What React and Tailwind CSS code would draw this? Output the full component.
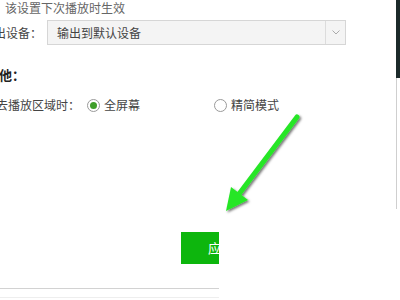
import React from "react";

const font = { fontFamily: '"Noto Sans CJK SC", "Noto Sans", sans-serif' };

function Radio({ checked }) {
  return (
    <span className="w-[13px] h-[13px] rounded-full border border-[#9a9a9a] bg-white flex items-center justify-center shrink-0">
      {checked && <span className="w-[7px] h-[7px] rounded-full bg-[#3f9e2a]" />}
    </span>
  );
}

export default function App() {
  return (
    <div className="relative w-[400px] h-[300px] overflow-hidden bg-white flex" style={font}>
      <div className="flex-1 flex flex-col text-[12px] leading-[16px] text-[#555]">
        <div className="ml-[5px] text-[#666]">该设置下次播放时生效</div>
        <div className="mt-[4px] flex items-center h-[25px]">
          <span className="ml-[-18px] w-[65px] shrink-0 text-[#444]">输出设备：</span>
          <div className="w-[299px] h-[25px] border border-[#d6d6d6] bg-[#f4f4f4] flex items-center">
            <span className="flex-1 pl-[9px] text-[#444]">输出到默认设备</span>
            <span className="w-[20px] h-full border-l border-[#dcdcdc] flex items-center justify-center">
              <svg width="8" height="5" viewBox="0 0 8 5">
                <path d="M0.5 0.5 L4 4 L7.5 0.5" fill="none" stroke="#aaa" strokeWidth="1" />
              </svg>
            </span>
          </div>
        </div>
        <div className="mt-[22px] ml-[-14px] font-bold text-[13px] text-[#222]">其他：</div>
        <div className="mt-[14px] flex items-center h-[16px]">
          <span className="ml-[-16px] w-[103px] shrink-0 text-[#444]">失去播放区域时：</span>
          <Radio checked />
          <span className="ml-[4px] w-[110px] text-[#444]">全屏幕</span>
          <Radio />
          <span className="ml-[4px] text-[#444]">精简模式</span>
        </div>
        <div className="mt-[119px] ml-[181px] w-[80px] h-[32px] bg-[#0db60d] text-white text-[13px] flex items-center justify-center">
          应用
        </div>
        <div className="mt-[24px] h-px bg-[#d2d2d2]" />
        <div className="mt-[8px] h-px bg-[#eeeeee]" />
      </div>
      <div className="w-[4px] flex flex-col">
        <div className="h-[78px] bg-[#1c2a2a]" />
        <div className="flex-1 border-l border-[#cfcfcf] bg-white" />
      </div>

      <div className="absolute left-[219px] top-[209px] right-0 bottom-0 bg-white" />

      <svg className="absolute left-[215px] top-[110px]" width="95" height="110" viewBox="0 0 95 110">
        <defs>
          <filter id="sh" x="-30%" y="-30%" width="160%" height="160%">
            <feDropShadow dx="1.5" dy="1.5" stdDeviation="1.3" floodColor="#000" floodOpacity="0.55" />
          </filter>
        </defs>
        <g filter="url(#sh)">
          <line x1="82" y1="7" x2="24" y2="84" stroke="#28e628" strokeWidth="5" strokeLinecap="round" />
          <polygon points="11,101 33,90 16,77" fill="#28e628" />
        </g>
      </svg>
    </div>
  );
}
